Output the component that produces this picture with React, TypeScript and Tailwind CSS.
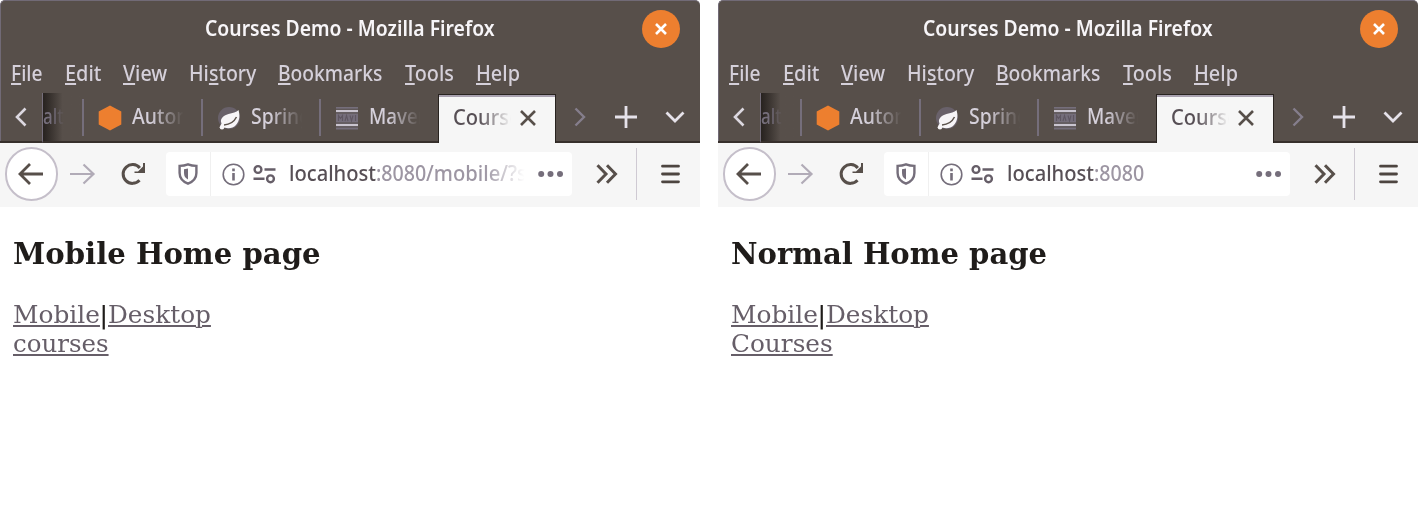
import { useLayoutEffect, useRef, useState, type ReactNode } from "react";

/** Sets a run of text condensed to exactly the given width. */
function Fit({ w, className = "", children }: { w: number; className?: string; children: ReactNode }) {
  const ref = useRef<HTMLSpanElement>(null);
  const [scale, setScale] = useState(1);
  useLayoutEffect(() => {
    if (ref.current) setScale(w / ref.current.offsetWidth);
  }, [w]);
  return (
    <span className="block shrink-0" style={{ width: w }}>
      <span
        ref={ref}
        className={`block w-max origin-left whitespace-nowrap ${className}`}
        style={{ transform: `scaleX(${scale})` }}
      >
        {children}
      </span>
    </span>
  );
}

const menu: [string, string, string, number][] = [
  ["", "F", "ile", 32],
  ["", "E", "dit", 36],
  ["", "V", "iew", 44],
  ["Hi", "s", "tory", 67],
  ["", "B", "ookmarks", 104.5],
  ["", "T", "ools", 49],
  ["", "H", "elp", 43.5],
];

function Hexagon() {
  return (
    <svg width="24" height="26" viewBox="0 0 24 26">
      <path d="M12 .5 23.3 6.5v13L12 25.5.7 19.500v-13z" fill="#ed7f2f" />
    </svg>
  );
}

function SpringLeaf() {
  return (
    <svg width="24" height="26" viewBox="0 0 24 26">
      <circle cx="12" cy="13" r="11" fill="#69616a" />
      <path d="M21.500 5c-2 2.500-6 3-10 4C6 10.500 2.500 14 4.500 18.500l-1 2c5 4 12 3.500 15.500-.5C23 15.500 23 10 21.500 5z" fill="#f7f5f8" />
      <path d="M7 20c6-.5 10-3 12.500-8" fill="none" stroke="#5b524c" strokeWidth="1.500" />
      <circle cx="5" cy="22.300" r="2.300" fill="#f7f5f8" />
    </svg>
  );
}

function MavenMark() {
  return (
    <svg width="24" height="24" viewBox="0 0 24 24">
      <path d="M1 1h22v22.500H1z" fill="#756e7b" />
      <path d="M1 5h22M1 19h22" stroke="#c9c4cf" strokeWidth="1.800" />
      <path d="M1 3.200h22M1 7h22M1 17h22M1 21h22" stroke="#574f4a" strokeWidth="1" />
      <path d="M3.500 15V9.500l2 3 2-3V15M10 15l1.500-5.500L13 15M15 9.500l1.500 5.500L18 9.500M20.500 9v6" fill="none" stroke="#5f5762" strokeWidth="1.100" />
    </svg>
  );
}

const tabs = [
  { icon: <Hexagon />, label: "Autom", w: 63 },
  { icon: <SpringLeaf />, label: "Spring", w: 60 },
  { icon: <MavenMark />, label: "Maven", w: 61 },
];

function TitleBar() {
  return (
    <div className="flex h-[58px] items-center pl-[205px] text-[21px] font-semibold text-[#f7f5f8]">
      <Fit w={289.5}>Courses Demo - Mozilla Firefox</Fit>
      <div className="ml-[147.500px] flex size-[38px] items-center justify-center rounded-full bg-[#ed7f2f]">
        <svg width="14" height="14" viewBox="0 0 14 14" stroke="#fff" strokeWidth="2.600">
          <path d="M2 2l10 10M12 2 2 12" />
        </svg>
      </div>
    </div>
  );
}

function MenuBar() {
  return (
    <div className="flex h-[35px] items-center gap-[22px] pb-[4px] pl-[11px] text-[21px] font-medium text-[#d5d0da]">
      {menu.map(([before, key, after, w]) => (
        <Fit key={key + after} w={w}>
          {before}
          <span className="underline decoration-2 underline-offset-[2px]">{key}</span>
          {after}
        </Fit>
      ))}
    </div>
  );
}

function TabStrip() {
  return (
    <div className="flex h-[50px] items-stretch text-[21px] font-medium text-[#d5d0da]">
      <div className="flex w-[42px] items-center justify-center border-b-2 border-[#37302c]">
        <svg width="12" height="20" viewBox="0 0 12 20" fill="none" stroke="#dcd8e0" strokeWidth="2.600">
          <path d="M10.500 1.500 2 10l8.500 8.500" />
        </svg>
      </div>
      <div className="flex w-[40px] items-center overflow-hidden border-b-2 border-l border-b-[#37302c] border-l-[#756e7b] bg-linear-to-r from-[#27221f] to-[#574f4a] to-50% text-[#756e7b]">
        <span className="w-[22px] mask-r-from-40% mask-r-to-100%">
          <Fit w={21}>alt</Fit>
        </span>
      </div>
      {tabs.map((tab) => (
        <div key={tab.label} className="flex w-[118.500px] items-center border-b-2 border-[#37302c]">
          <div className="h-[37px] w-[2px] bg-[#756e7b]" />
          <div className="ml-[14px] flex w-[24px] justify-center pt-px">{tab.icon}</div>
          <div className="ml-[10px] w-[54px] overflow-hidden pb-px mask-r-from-35% mask-r-to-95%">
            <Fit w={tab.w}>{tab.label}</Fit>
          </div>
        </div>
      ))}
      <div className="mt-px flex w-[118px] items-center border-x border-t border-[#28231f] bg-[#f6f6f6] pl-[14px] text-[#574f55] shadow-[inset_0_2px_0_#a8a1af]">
        <div className="w-[58px] overflow-hidden pb-[3px] mask-r-from-45% mask-r-to-100%">
          <Fit w={67}>Course</Fit>
        </div>
        <svg className="ml-[8.500px]" width="18" height="18" viewBox="0 0 18 18" stroke="#574f4a" strokeWidth="2.600">
          <path d="M2 1l14 14M16 1 2 15" />
        </svg>
      </div>
      <div className="flex flex-1 items-center border-b-2 border-[#37302c] pl-[18px]">
        <svg width="12" height="20" viewBox="0 0 12 20" fill="none" stroke="#857e8c" strokeWidth="2.400">
          <path d="M1.500 1.500 10 10l-8.500 8.500" />
        </svg>
        <svg className="ml-[29px]" width="22" height="22" viewBox="0 0 22 22" stroke="#e6e2ea" strokeWidth="2.800">
          <path d="M11 0v22M0 11h22" />
        </svg>
        <svg className="ml-[28px]" width="20" height="12" viewBox="0 0 20 12" fill="none" stroke="#e6e2ea" strokeWidth="2.800">
          <path d="m1.500 1.500 8.500 8.500 8.500-8.500" />
        </svg>
      </div>
    </div>
  );
}

function AddressBar({ path }: { path: string }) {
  return (
    <div className="ml-[20px] flex h-[44px] w-[406px] items-center rounded-[4px] bg-white">
      <svg className="ml-[12px]" width="20" height="22" viewBox="0 0 20 22" fill="none" stroke="#756e7b">
        <path d="M10 1.400c3 1.200 5.500 1.500 8.400 1.500v7c0 5-3 8.500-8.400 10.700C4.600 18.400 1.600 14.900 1.600 9.900v-7c2.900 0 5.400-.3 8.400-1.500z" strokeWidth="2.400" />
        <path d="M10 5.500v11c-2.600-1.500-4-3.300-4-6.500V6.200z" fill="#756e7b" stroke="none" />
      </svg>
      <div className="ml-[12px] h-full w-px bg-[#f0f0f0]" />
      <svg className="ml-[11px]" width="23" height="23" viewBox="0 0 23 23" fill="none" stroke="#756e7b">
        <circle cx="11.500" cy="11.500" r="10.300" strokeWidth="1.600" />
        <path d="M11.500 10v7.500M11.500 5.500v2.700" strokeWidth="2.600" />
      </svg>
      <svg className="ml-[8px]" width="24" height="20" viewBox="0 0 24 20" fill="none" stroke="#665e68" strokeWidth="2.400">
        <circle cx="5" cy="5.500" r="3.400" />
        <path d="M11.500 5.500H22.500M.5 14.800h11" />
        <circle cx="17.500" cy="14.800" r="3.400" />
      </svg>
      <div className="ml-[12px] flex w-[238px] overflow-hidden pb-[3px] text-[22px] font-medium mask-r-from-82% mask-r-to-99%">
        <Fit w={87} className="text-[#574f55]">localhost</Fit>
        <Fit w={50} className="text-[#9d96a3]">:8080</Fit>
        {path && <Fit w={101} className="text-[#9d96a3]">{path}</Fit>}
      </div>
      <svg className="ml-[11px]" width="26" height="8" viewBox="0 0 26 8" fill="#756e7b">
        <circle cx="3.200" cy="4" r="3" />
        <circle cx="12.500" cy="4" r="3" />
        <circle cx="22" cy="4" r="3" />
      </svg>
    </div>
  );
}

function NavBar({ path }: { path: string }) {
  return (
    <div className="flex h-[64px] items-center bg-[#f6f6f6] pb-[2px]">
      <div className="ml-[4.500px] flex size-[53.500px] items-center justify-center rounded-full border-2 border-[#c5bfca] bg-white">
        <svg width="26" height="22" viewBox="0 0 26 22" fill="none" stroke="#574f4a" strokeWidth="2.800">
          <path d="M25 11H2M12 1 2 11l10 10" />
        </svg>
      </div>
      <svg className="ml-[12px]" width="26" height="22" viewBox="0 0 26 22" fill="none" stroke="#b1abb7" strokeWidth="2.200">
        <path d="M0 11h24M13.500 1.500 23.500 11l-10 9.500" />
      </svg>
      <svg className="ml-[25px]" width="25" height="24" viewBox="0 0 25 24">
        <path d="M18.500 18.300A9.400 9.400 0 1 1 18.800 6" fill="none" stroke="#574f4a" strokeWidth="3" />
        <path d="M24 1v10H13.500V9.500h3.500L22 4.500V1z" fill="#574f4a" />
      </svg>
      <AddressBar path={path} />
      <svg className="ml-[24px]" width="22" height="20" viewBox="0 0 22 20" fill="none" stroke="#574f4a" strokeWidth="3">
        <path d="m1.500 1.200 8.500 8.800-8.500 8.800M11 1.200l8.500 8.800-8.500 8.800" />
      </svg>
      <div className="ml-[18px] h-[52px] w-px bg-[#cfcad3]" />
      <svg className="ml-[24px]" width="19" height="20" viewBox="0 0 19 20" stroke="#4d4540" strokeWidth="2.800" strokeLinecap="round">
        <path d="M1.500 2.200h16M1.500 10h16M1.500 17.800h16" />
      </svg>
    </div>
  );
}

function BrowserWindow({ path, heading, courses }: { path: string; heading: ReactNode; courses: ReactNode }) {
  return (
    <section className="w-[700px] shrink-0">
      <header className="rounded-t-[5px] border-t border-l border-[#716a76] bg-[#574f4a] font-['Noto_Sans',sans-serif]">
        <div className="-mt-px -ml-px">
          <TitleBar />
          <MenuBar />
          <TabStrip />
        </div>
      </header>
      <div className="font-['Noto_Sans',sans-serif]">
        <NavBar path={path} />
      </div>
      <main className="pt-[30px] pl-[12.500px] font-['DejaVu_Serif',serif] text-[25px] leading-[29px] text-[#1f1c1a]">
        <h3 className="text-[29px] leading-[34px] font-bold">{heading}</h3>
        <div className="mt-[29px] flex">
          <Fit w={86.5} className="text-[#665e68] underline decoration-2 underline-offset-2">Mobile</Fit>
          <Fit w={9}>|</Fit>
          <Fit w={103} className="text-[#665e68] underline decoration-2 underline-offset-2">Desktop</Fit>
        </div>
        {courses}
      </main>
    </section>
  );
}

export default function App() {
  return (
    <div className="flex h-[530px] w-[1418px] gap-[18px] overflow-hidden bg-white">
      <BrowserWindow
        path="/mobile/?s"
        heading={<Fit w={307.5}>Mobile Home page</Fit>}
        courses={<Fit w={96} className="text-[#665e68] underline decoration-2 underline-offset-2">courses</Fit>}
      />
      <BrowserWindow
        path=""
        heading={<Fit w={316.5}>Normal Home page</Fit>}
        courses={<Fit w={102} className="text-[#665e68] underline decoration-2 underline-offset-2">Courses</Fit>}
      />
    </div>
  );
}
